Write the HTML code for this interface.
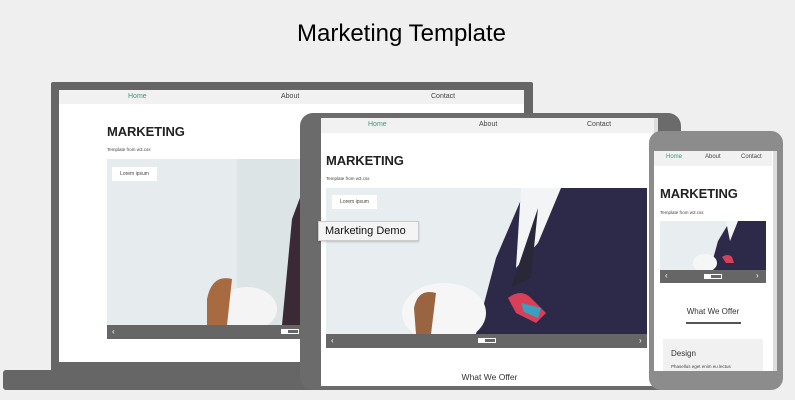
<!DOCTYPE html>
<html><head><style>
*{margin:0;padding:0;box-sizing:border-box}
body{width:795px;height:400px;background:#efefef;position:relative;overflow:hidden;font-family:"Liberation Sans",sans-serif}
.a{position:absolute}
.nav{background:#f1f1f1;font-size:7px;color:#444}
.nav span{position:absolute;top:3px}
.h{color:#3a9a7a}
.mk{font-size:13px;color:#222;font-weight:bold;letter-spacing:-0.1px}
.sm{font-size:4.5px;color:#444}
.bar{background:#666}
.btn{background:#fff;font-size:5px;color:#444;text-align:center}
</style></head><body>
<div class="a" style="left:0;top:20px;width:803px;text-align:center;font-size:24px;color:#000">Marketing Template</div>

<!-- laptop -->
<div class="a" style="left:51px;top:82px;width:482px;height:290px;background:#666;border-radius:2px"></div>
<div class="a" style="left:3px;top:370px;width:320px;height:20px;background:#666;border-radius:3px"></div>
<div class="a" style="left:59px;top:90px;width:465px;height:272px;background:#fff"></div>
<div class="a nav" style="left:59px;top:90px;width:465px;height:14px"><span class="h" style="left:69px">Home</span><span style="left:222px">About</span><span style="left:372px">Contact</span></div>
<div class="a mk" style="left:107px;top:124px">MARKETING</div>
<div class="a sm" style="left:107px;top:147px">Template from w3.css</div>
<svg class="a" style="left:107px;top:159px" width="200" height="166"><rect width="200" height="166" fill="#e6eced"/><rect x="130" width="70" height="166" fill="#dde4e5"/><path d="M175 166 L185 60 L200 20 L200 166Z" fill="#3a2a35"/><ellipse cx="140" cy="150" rx="30" ry="22" fill="#f4f4f4"/><path d="M100 140 Q105 115 125 120 L120 166 L100 166Z" fill="#a86a40"/></svg>
<div class="a btn" style="left:112px;top:167px;width:45px;height:14px;line-height:14px">Lorem ipsum</div>
<div class="a bar" style="left:107px;top:325px;width:200px;height:14px"></div>
<div class="a" style="left:112px;top:327px;color:#fff;font-size:8px">‹</div>
<div class="a" style="left:281px;top:329px;width:18px;height:5px;border:1px solid #fff;background:linear-gradient(90deg,#fff 6px,transparent 6px)"></div>

<!-- tablet -->
<div class="a" style="left:300px;top:113px;width:381px;height:277px;background:#6b6b6b;border-radius:13px"></div>
<div class="a" style="left:321px;top:118px;width:337px;height:268px;background:#fff"></div>
<div class="a nav" style="left:321px;top:118px;width:337px;height:15px"><span class="h" style="left:47px">Home</span><span style="left:158px">About</span><span style="left:266px">Contact</span></div>
<div class="a" style="left:654px;top:118px;width:4px;height:268px;background:#ddd"></div>
<div class="a mk" style="left:326px;top:153px">MARKETING</div>
<div class="a sm" style="left:326px;top:176px">Template from w3.css</div>
<svg class="a" style="left:326px;top:188px" width="321" height="146"><rect width="321" height="146" fill="#e8eeef"/><path d="M150 146 L170 70 L200 0 L321 0 L321 146Z" fill="#2c2a48"/><path d="M195 0 L235 0 L212 55 L190 80Z" fill="#f2f4f6"/><path d="M185 100 L212 20 L205 90Z" fill="#2a2838"/><ellipse cx="118" cy="125" rx="42" ry="30" fill="#f6f6f6"/><path d="M88 120 Q92 100 110 105 L105 146 L90 146Z" fill="#9a6440"/><path d="M182 110 Q195 100 205 110 L220 125 L210 135 L190 125Z" fill="#d8405a"/><path d="M195 115 L215 120 L212 130 L198 124Z" fill="#3aa0c0"/></svg>
<div class="a btn" style="left:332px;top:195px;width:45px;height:14px;line-height:14px">Lorem ipsum</div>
<div class="a bar" style="left:326px;top:334px;width:321px;height:14px"></div>
<div class="a" style="left:331px;top:336px;color:#fff;font-size:8px">‹</div>
<div class="a" style="left:639px;top:336px;color:#fff;font-size:8px">›</div>
<div class="a" style="left:478px;top:338px;width:18px;height:5px;border:1px solid #fff;background:linear-gradient(90deg,#fff 6px,transparent 6px)"></div>
<div class="a" style="left:321px;top:372px;width:337px;text-align:center;font-size:8.5px;color:#333">What We Offer</div>
<div class="a" style="left:318px;top:221px;width:101px;height:20px;background:#f4f4f4;border:1px solid #ccc;box-shadow:0 1px 2px rgba(0,0,0,.2);font-size:11px;line-height:18px;padding-left:6px;color:#111">Marketing Demo</div>

<!-- phone -->
<div class="a" style="left:649px;top:131px;width:134px;height:259px;background:#8c8c8c;border-radius:12px"></div>
<div class="a" style="left:654px;top:151px;width:123px;height:220px;background:#fff"></div>
<div class="a nav" style="left:654px;top:151px;width:118px;height:15px;font-size:6px"><span class="h" style="left:12px">Home</span><span style="left:51px">About</span><span style="left:87px">Contact</span></div>
<div class="a" style="left:773px;top:151px;width:4px;height:220px;background:#ddd"></div>
<div class="a mk" style="left:660px;top:186px">MARKETING</div>
<div class="a sm" style="left:660px;top:210px">Template from w3.css</div>
<svg class="a" style="left:660px;top:221px" width="106" height="49"><rect width="106" height="49" fill="#e8eeef"/><path d="M50 49 L58 20 L70 0 L106 0 L106 49Z" fill="#2c2a48"/><path d="M66 0 L78 0 L70 20Z" fill="#f2f4f6"/><ellipse cx="45" cy="42" rx="12" ry="9" fill="#f6f6f6"/><path d="M62 36 Q68 32 72 36 L74 42 L66 42Z" fill="#d8405a"/></svg>
<div class="a bar" style="left:660px;top:270px;width:106px;height:13px"></div>
<div class="a" style="left:665px;top:271px;color:#fff;font-size:8px">‹</div>
<div class="a" style="left:756px;top:271px;color:#fff;font-size:8px">›</div>
<div class="a" style="left:704px;top:274px;width:18px;height:5px;border:1px solid #fff;background:linear-gradient(90deg,#fff 6px,transparent 6px)"></div>
<div class="a" style="left:654px;top:307px;width:118px;text-align:center;font-size:8px;color:#333">What We Offer</div>
<div class="a" style="left:686px;top:322px;width:55px;height:2px;background:#555"></div>
<div class="a" style="left:663px;top:339px;width:100px;height:32px;background:#f1f1f1"></div>
<div class="a" style="left:671px;top:349px;font-size:8px;color:#333">Design</div>
<div class="a sm" style="left:671px;top:364px">Phasellus eget enim eu lectus</div>
</body></html>
